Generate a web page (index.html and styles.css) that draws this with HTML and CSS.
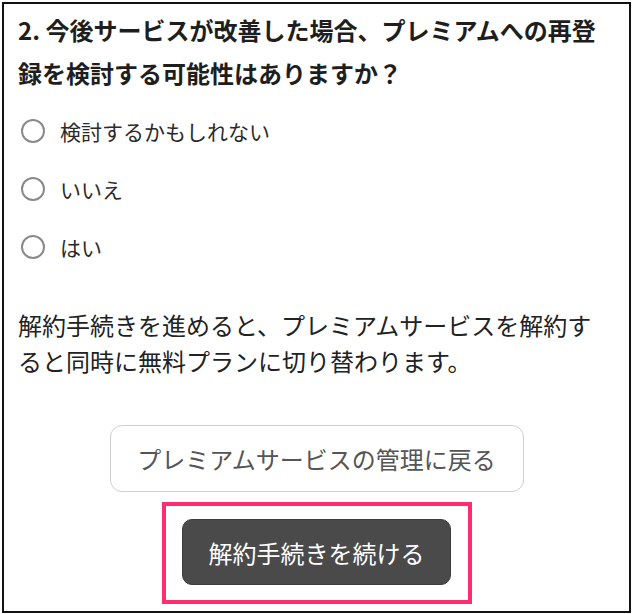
FILE: index.html
```html
<!DOCTYPE html>
<html lang="ja">
<head>
<meta charset="utf-8">
<title>アンケート</title>
<link rel="stylesheet" href="styles.css">
</head>
<body>
<div class="frame">
  <h2 class="question">2. 今後サービスが改善した場合、プレミアムへの再登録を検討する可能性はありますか？</h2>
  <ul class="options">
    <li class="option"><span class="radio"></span><span class="label">検討するかもしれない</span></li>
    <li class="option"><span class="radio"></span><span class="label">いいえ</span></li>
    <li class="option"><span class="radio"></span><span class="label">はい</span></li>
  </ul>
  <p class="notice">解約手続きを進めると、プレミアムサービスを解約すると同時に無料プランに切り替わります。</p>
  <div class="actions">
    <button class="btn btn-outline">プレミアムサービスの管理に戻る</button>
    <div class="highlight">
      <button class="btn btn-dark">解約手続きを続ける</button>
    </div>
  </div>
</div>
</body>
</html>
```

FILE: styles.css
```css
html, body {
  margin: 0;
  padding: 0;
  background: #ffffff;
}

body {
  font-family: "Noto Sans CJK JP", "Noto Sans", sans-serif;
  color: #222222;
}

.frame {
  box-sizing: border-box;
  width: 629px;
  height: 611px;
  margin: 2px 0 0 2px;
  border: 2px solid #111111;
  padding: 4px 14px 0 14px;
  display: flex;
  flex-direction: column;
}

.question {
  margin: 0 0 8px 0;
  font-size: 24px;
  font-weight: 700;
  line-height: 43px;
  color: #1e1e1e;
}

.options {
  list-style: none;
  margin: 0;
  padding: 0;
}

.option {
  display: flex;
  align-items: center;
  height: 58px;
  gap: 15px;
}

.radio {
  box-sizing: border-box;
  width: 24px;
  height: 24px;
  margin-left: 3px;
  border: 2px solid #8a8a8a;
  border-radius: 50%;
  flex: none;
}

.label {
  font-size: 21px;
  color: #2a2a2a;
}

.notice {
  margin: 31px 0 0 0;
  font-size: 24px;
  line-height: 36px;
  color: #222222;
}

.actions {
  margin-top: 46px;
  display: flex;
  flex-direction: column;
  align-items: center;
  gap: 10px;
}

.btn {
  font-family: "Noto Sans CJK JP", "Noto Sans", sans-serif;
  font-size: 24px;
  cursor: pointer;
}

.btn-outline {
  box-sizing: border-box;
  width: 414px;
  height: 67px;
  background: #ffffff;
  color: #555555;
  border: 1.5px solid #cfcfcf;
  border-radius: 12px;
}

.highlight {
  box-sizing: border-box;
  width: 310px;
  height: 102px;
  border: 4px solid #ff2d6f;
  display: flex;
  align-items: center;
  justify-content: center;
  padding-bottom: 2px;
}

.btn-dark {
  box-sizing: border-box;
  width: 269px;
  height: 66px;
  background: #4a4a4a;
  color: #ffffff;
  border: 1px solid #3c3c3c;
  border-radius: 10px;
}
```
